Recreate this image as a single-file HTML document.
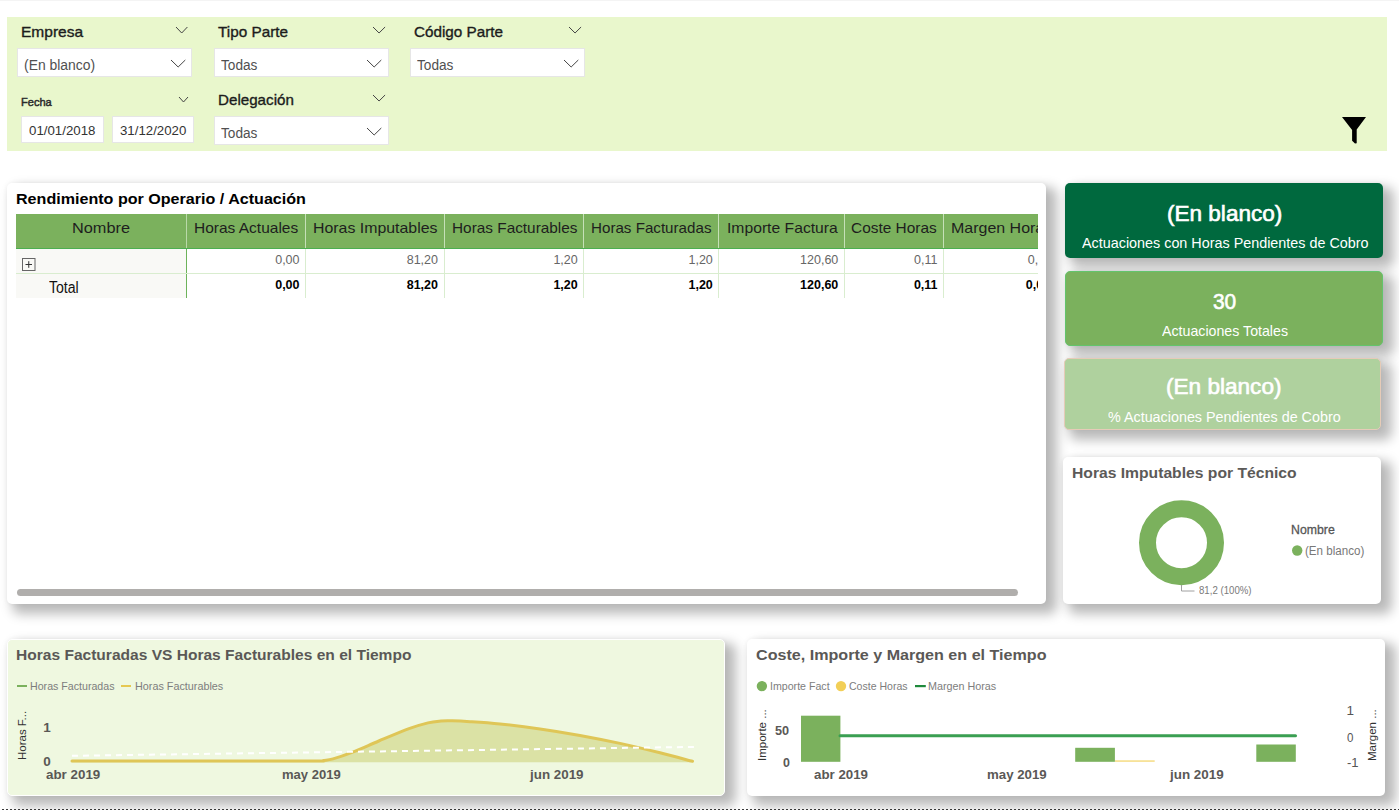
<!DOCTYPE html>
<html lang="es"><head><meta charset="utf-8"><title>Rendimiento por Operario</title>
<style>
html,body{margin:0;padding:0;background:#fff;}
body{width:1399px;height:810px;position:relative;overflow:hidden;font-family:"Liberation Sans",sans-serif;}
</style></head><body>
<div style="position:absolute;left:0.00px;top:0.00px;width:1399.00px;height:1.00px;background:#f4f4f4;"></div>
<div style="position:absolute;left:7.00px;top:17.00px;width:1380.00px;height:134.00px;background:#e9f7cc;"></div>
<span style="position:absolute;left:20.70px;top:24.00px;font-size:15px;line-height:15px;color:#1c1c1c;white-space:nowrap;transform-origin:0 0;transform:scaleX(1.0354);-webkit-text-stroke:0.35px #1c1c1c;">Empresa</span>
<span style="position:absolute;left:217.90px;top:24.00px;font-size:15px;line-height:15px;color:#1c1c1c;white-space:nowrap;transform-origin:0 0;transform:scaleX(1.0200);-webkit-text-stroke:0.35px #1c1c1c;">Tipo Parte</span>
<span style="position:absolute;left:413.60px;top:24.00px;font-size:15px;line-height:15px;color:#1c1c1c;white-space:nowrap;transform-origin:0 0;transform:scaleX(1.0169);-webkit-text-stroke:0.35px #1c1c1c;">Código Parte</span>
<span style="position:absolute;left:218.30px;top:92.00px;font-size:15px;line-height:15px;color:#1c1c1c;white-space:nowrap;transform-origin:0 0;transform:scaleX(1.0110);-webkit-text-stroke:0.35px #1c1c1c;">Delegación</span>
<span style="position:absolute;left:21.40px;top:97.00px;font-size:11px;line-height:11px;color:#2a2a2a;white-space:nowrap;transform-origin:0 0;transform:scaleX(1.0054);-webkit-text-stroke:0.45px #2a2a2a;">Fecha</span>
<div style="position:absolute;left:17.00px;top:48.00px;width:174.50px;height:29.00px;background:#fff;box-sizing:border-box;border:1px solid #e6e6e6;"></div>
<div style="position:absolute;left:214.30px;top:48.00px;width:174.30px;height:29.00px;background:#fff;box-sizing:border-box;border:1px solid #e6e6e6;"></div>
<div style="position:absolute;left:410.30px;top:48.00px;width:174.30px;height:29.00px;background:#fff;box-sizing:border-box;border:1px solid #e6e6e6;"></div>
<div style="position:absolute;left:214.30px;top:116.40px;width:174.30px;height:28.60px;background:#fff;box-sizing:border-box;border:1px solid #e6e6e6;"></div>
<div style="position:absolute;left:21.30px;top:115.50px;width:83.10px;height:27.80px;background:#fff;box-sizing:border-box;border:1px solid #e6e6e6;"></div>
<div style="position:absolute;left:111.60px;top:115.50px;width:82.80px;height:27.80px;background:#fff;box-sizing:border-box;border:1px solid #e6e6e6;"></div>
<span style="position:absolute;left:24.00px;top:58.00px;font-size:14px;line-height:14px;color:#505050;white-space:nowrap;transform-origin:0 0;transform:scaleX(0.9929);">(En blanco)</span>
<span style="position:absolute;left:221.10px;top:58.00px;font-size:14px;line-height:14px;color:#505050;white-space:nowrap;transform-origin:0 0;transform:scaleX(0.9738);">Todas</span>
<span style="position:absolute;left:417.10px;top:58.00px;font-size:14px;line-height:14px;color:#505050;white-space:nowrap;transform-origin:0 0;transform:scaleX(0.9738);">Todas</span>
<span style="position:absolute;left:221.10px;top:126.00px;font-size:14px;line-height:14px;color:#505050;white-space:nowrap;transform-origin:0 0;transform:scaleX(0.9738);">Todas</span>
<span style="position:absolute;left:29.00px;top:124.00px;font-size:13px;line-height:13px;color:#333;white-space:nowrap;transform-origin:0 0;transform:scaleX(1.0205);">01/01/2018</span>
<span style="position:absolute;left:119.70px;top:124.00px;font-size:13px;line-height:13px;color:#333;white-space:nowrap;transform-origin:0 0;transform:scaleX(1.0190);">31/12/2020</span>
<svg style="position:absolute;left:176.00px;top:27.00px;overflow:visible" width="11.40" height="6.00"><polyline points="0,0 5.70,6.00 11.40,0" fill="none" stroke="#444" stroke-width="1"/></svg>
<svg style="position:absolute;left:372.90px;top:27.00px;overflow:visible" width="12.10" height="6.00"><polyline points="0,0 6.05,6.00 12.10,0" fill="none" stroke="#444" stroke-width="1"/></svg>
<svg style="position:absolute;left:568.60px;top:27.00px;overflow:visible" width="12.10" height="6.00"><polyline points="0,0 6.05,6.00 12.10,0" fill="none" stroke="#444" stroke-width="1"/></svg>
<svg style="position:absolute;left:372.90px;top:95.00px;overflow:visible" width="12.10" height="6.00"><polyline points="0,0 6.05,6.00 12.10,0" fill="none" stroke="#444" stroke-width="1"/></svg>
<svg style="position:absolute;left:178.90px;top:97.00px;overflow:visible" width="9.00" height="5.00"><polyline points="0,0 4.50,5.00 9.00,0" fill="none" stroke="#444" stroke-width="1"/></svg>
<svg style="position:absolute;left:170.70px;top:60.00px;overflow:visible" width="14.30" height="7.00"><polyline points="0,0 7.15,7.00 14.30,0" fill="none" stroke="#444" stroke-width="1"/></svg>
<svg style="position:absolute;left:367.40px;top:60.00px;overflow:visible" width="14.30" height="7.00"><polyline points="0,0 7.15,7.00 14.30,0" fill="none" stroke="#444" stroke-width="1"/></svg>
<svg style="position:absolute;left:563.60px;top:60.00px;overflow:visible" width="14.30" height="7.00"><polyline points="0,0 7.15,7.00 14.30,0" fill="none" stroke="#444" stroke-width="1"/></svg>
<svg style="position:absolute;left:367.40px;top:128.00px;overflow:visible" width="14.30" height="7.00"><polyline points="0,0 7.15,7.00 14.30,0" fill="none" stroke="#444" stroke-width="1"/></svg>
<svg style="position:absolute;left:0;top:0;overflow:visible" width="10" height="10"><path d="M1342 117 L1366 117 L1356.7 129.6 L1356.7 143.2 L1355 143.5 L1352.1 140.8 L1352.1 130 Z" fill="#000"/></svg>
<div style="position:absolute;left:7.00px;top:183.00px;width:1039.40px;height:421.00px;background:#fff;border-radius:5px;box-shadow:8px 7px 12px 3px rgba(0,0,0,.27),0 0 5px rgba(0,0,0,.05);"></div>
<span style="position:absolute;left:16.30px;top:191.00px;font-size:15.5px;line-height:15.5px;color:#000;white-space:nowrap;transform-origin:0 0;transform:scaleX(1.0379);font-weight:700;">Rendimiento por Operario / Actuación</span>
<div style="position:absolute;left:16px;top:214px;width:1022px;height:85px;overflow:hidden">
<div style="position:absolute;left:0.00px;top:0.00px;width:1022.00px;height:34.00px;background:#7bb15d;"></div>
<div style="position:absolute;left:0.00px;top:34.00px;width:1022.00px;height:1.00px;background:#4cae50;"></div>
<div style="position:absolute;left:0.00px;top:35.00px;width:170.00px;height:49.00px;background:#f9f9f6;"></div>
<div style="position:absolute;left:170.00px;top:0.00px;width:1.00px;height:34.00px;background:#b9d9a8;"></div>
<div style="position:absolute;left:170.00px;top:35.00px;width:1.00px;height:49.00px;background:#6db35a;"></div>
<div style="position:absolute;left:289.00px;top:0.00px;width:1.00px;height:34.00px;background:#c6e0b8;"></div>
<div style="position:absolute;left:289.00px;top:35.00px;width:1.00px;height:49.00px;background:#d9edcf;"></div>
<div style="position:absolute;left:427.50px;top:0.00px;width:1.00px;height:34.00px;background:#c6e0b8;"></div>
<div style="position:absolute;left:427.50px;top:35.00px;width:1.00px;height:49.00px;background:#d9edcf;"></div>
<div style="position:absolute;left:567.20px;top:0.00px;width:1.00px;height:34.00px;background:#c6e0b8;"></div>
<div style="position:absolute;left:567.20px;top:35.00px;width:1.00px;height:49.00px;background:#d9edcf;"></div>
<div style="position:absolute;left:702.30px;top:0.00px;width:1.00px;height:34.00px;background:#c6e0b8;"></div>
<div style="position:absolute;left:702.30px;top:35.00px;width:1.00px;height:49.00px;background:#d9edcf;"></div>
<div style="position:absolute;left:827.80px;top:0.00px;width:1.00px;height:34.00px;background:#c6e0b8;"></div>
<div style="position:absolute;left:827.80px;top:35.00px;width:1.00px;height:49.00px;background:#d9edcf;"></div>
<div style="position:absolute;left:927.00px;top:0.00px;width:1.00px;height:34.00px;background:#c6e0b8;"></div>
<div style="position:absolute;left:927.00px;top:35.00px;width:1.00px;height:49.00px;background:#d9edcf;"></div>
<div style="position:absolute;left:0.00px;top:59.00px;width:1022.00px;height:1.00px;background:#d9edcf;"></div>

<span style="position:absolute;left:56.00px;top:6.00px;font-size:15px;line-height:15px;color:#1e1e1e;white-space:nowrap;transform-origin:0 0;transform:scaleX(1.0877);">Nombre</span>
<span style="position:absolute;left:178.10px;top:6.00px;font-size:15px;line-height:15px;color:#1e1e1e;white-space:nowrap;transform-origin:0 0;transform:scaleX(1.0330);">Horas Actuales</span>
<span style="position:absolute;left:297.00px;top:6.00px;font-size:15px;line-height:15px;color:#1e1e1e;white-space:nowrap;transform-origin:0 0;transform:scaleX(1.0585);">Horas Imputables</span>
<span style="position:absolute;left:435.50px;top:6.00px;font-size:15px;line-height:15px;color:#1e1e1e;white-space:nowrap;transform-origin:0 0;transform:scaleX(1.0241);">Horas Facturables</span>
<span style="position:absolute;left:575.40px;top:6.00px;font-size:15px;line-height:15px;color:#1e1e1e;white-space:nowrap;transform-origin:0 0;transform:scaleX(1.0105);">Horas Facturadas</span>
<span style="position:absolute;left:710.60px;top:6.00px;font-size:15px;line-height:15px;color:#1e1e1e;white-space:nowrap;transform-origin:0 0;transform:scaleX(1.0463);">Importe Factura</span>
<span style="position:absolute;left:835.30px;top:6.00px;font-size:15px;line-height:15px;color:#1e1e1e;white-space:nowrap;transform-origin:0 0;transform:scaleX(1.0276);">Coste Horas</span>
<span style="position:absolute;left:934.50px;top:6.00px;font-size:15px;line-height:15px;color:#1e1e1e;white-space:nowrap;transform-origin:0 0;transform:scaleX(1.0650);">Margen Horas</span>
<span style="position:absolute;left:259.19px;top:40.00px;font-size:12.5px;line-height:12.5px;color:#666;white-space:nowrap;transform-origin:0 0;transform:scaleX(1.0000);">0,00</span>
<span style="position:absolute;left:259.19px;top:65.00px;font-size:12.5px;line-height:12.5px;color:#000;white-space:nowrap;transform-origin:0 0;transform:scaleX(1.0000);font-weight:700;">0,00</span>
<span style="position:absolute;left:390.69px;top:40.00px;font-size:12.5px;line-height:12.5px;color:#666;white-space:nowrap;transform-origin:0 0;transform:scaleX(1.0000);">81,20</span>
<span style="position:absolute;left:390.69px;top:65.00px;font-size:12.5px;line-height:12.5px;color:#000;white-space:nowrap;transform-origin:0 0;transform:scaleX(1.0000);font-weight:700;">81,20</span>
<span style="position:absolute;left:537.39px;top:40.00px;font-size:12.5px;line-height:12.5px;color:#666;white-space:nowrap;transform-origin:0 0;transform:scaleX(1.0000);">1,20</span>
<span style="position:absolute;left:537.39px;top:65.00px;font-size:12.5px;line-height:12.5px;color:#000;white-space:nowrap;transform-origin:0 0;transform:scaleX(1.0000);font-weight:700;">1,20</span>
<span style="position:absolute;left:672.49px;top:40.00px;font-size:12.5px;line-height:12.5px;color:#666;white-space:nowrap;transform-origin:0 0;transform:scaleX(1.0000);">1,20</span>
<span style="position:absolute;left:672.49px;top:65.00px;font-size:12.5px;line-height:12.5px;color:#000;white-space:nowrap;transform-origin:0 0;transform:scaleX(1.0000);font-weight:700;">1,20</span>
<span style="position:absolute;left:784.05px;top:40.00px;font-size:12.5px;line-height:12.5px;color:#666;white-space:nowrap;transform-origin:0 0;transform:scaleX(1.0000);">120,60</span>
<span style="position:absolute;left:784.05px;top:65.00px;font-size:12.5px;line-height:12.5px;color:#000;white-space:nowrap;transform-origin:0 0;transform:scaleX(1.0000);font-weight:700;">120,60</span>
<span style="position:absolute;left:898.12px;top:40.00px;font-size:12.5px;line-height:12.5px;color:#666;white-space:nowrap;transform-origin:0 0;transform:scaleX(1.0000);">0,11</span>
<span style="position:absolute;left:897.88px;top:65.00px;font-size:12.5px;line-height:12.5px;color:#000;white-space:nowrap;transform-origin:0 0;transform:scaleX(1.0000);font-weight:700;">0,11</span>
<span style="position:absolute;left:1011.70px;top:40.00px;font-size:12.5px;line-height:12.5px;color:#666;white-space:nowrap;transform-origin:0 0;transform:scaleX(1.0000);">0,00</span>
<span style="position:absolute;left:1009.80px;top:65.00px;font-size:12.5px;line-height:12.5px;color:#000;white-space:nowrap;transform-origin:0 0;transform:scaleX(1.0000);font-weight:700;">0,00</span>
<span style="position:absolute;left:32.60px;top:66.00px;font-size:16px;line-height:16px;color:#111;white-space:nowrap;transform-origin:0 0;transform:scaleX(0.8797);">Total</span>
<svg style="position:absolute;left:6px;top:44px" width="14" height="14"><rect x="0.5" y="0.5" width="12.5" height="12" fill="none" stroke="#666" stroke-width="1"/><path d="M3.5 6.5 H10 M6.75 3.2 V9.8" stroke="#333" stroke-width="1" fill="none"/></svg>
</div>
<div style="position:absolute;left:17.00px;top:589.20px;width:1000.80px;height:7.10px;background:#b0aeac;border-radius:3.5px;"></div>
<div style="position:absolute;left:1065.00px;top:183.00px;width:318.00px;height:74.80px;background:#00693e;border-radius:5px;box-shadow:8px 7px 12px 3px rgba(0,0,0,.27),0 0 5px rgba(0,0,0,.05);"></div>
<div style="position:absolute;left:1065.00px;top:270.70px;width:318.00px;height:74.90px;background:#7bb15d;border-radius:5px;box-sizing:border-box;border:1px solid #63c46c;box-shadow:8px 7px 12px 3px rgba(0,0,0,.27),0 0 5px rgba(0,0,0,.05);"></div>
<div style="position:absolute;left:1063.70px;top:357.50px;width:317.60px;height:72.80px;background:#afd19e;border-radius:5px;box-sizing:border-box;border:1px solid #e6cbb8;box-shadow:8px 7px 12px 3px rgba(0,0,0,.27),0 0 5px rgba(0,0,0,.05);"></div>
<span style="position:absolute;left:1167.20px;top:203.00px;font-size:22.5px;line-height:22.5px;color:#fff;white-space:nowrap;transform-origin:0 0;transform:scaleX(1.0018);-webkit-text-stroke:0.65px #fff;">(En blanco)</span>
<span style="position:absolute;left:1082.00px;top:235.00px;font-size:15px;line-height:15px;color:#fff;white-space:nowrap;transform-origin:0 0;transform:scaleX(0.9572);">Actuaciones con Horas Pendientes de Cobro</span>
<span style="position:absolute;left:1213.40px;top:291.00px;font-size:22.5px;line-height:22.5px;color:#fff;white-space:nowrap;transform-origin:0 0;transform:scaleX(0.9289);-webkit-text-stroke:0.65px #fff;">30</span>
<span style="position:absolute;left:1162.20px;top:323.00px;font-size:15px;line-height:15px;color:#fff;white-space:nowrap;transform-origin:0 0;transform:scaleX(0.9465);">Actuaciones Totales</span>
<span style="position:absolute;left:1166.00px;top:376.00px;font-size:22.5px;line-height:22.5px;color:#fff;white-space:nowrap;transform-origin:0 0;transform:scaleX(1.0036);-webkit-text-stroke:0.65px #fff;">(En blanco)</span>
<span style="position:absolute;left:1107.90px;top:409.00px;font-size:15px;line-height:15px;color:#fff;white-space:nowrap;transform-origin:0 0;transform:scaleX(0.9555);">% Actuaciones Pendientes de Cobro</span>
<div style="position:absolute;left:1063.00px;top:457.00px;width:318.30px;height:147.10px;background:#fff;border-radius:5px;box-shadow:8px 7px 12px 3px rgba(0,0,0,.27),0 0 5px rgba(0,0,0,.05);"></div>
<span style="position:absolute;left:1072.40px;top:465.00px;font-size:15px;line-height:15px;color:#5c5a58;white-space:nowrap;transform-origin:0 0;transform:scaleX(1.0445);font-weight:700;">Horas Imputables por Técnico</span>
<svg style="position:absolute;left:1063px;top:457px" width="318" height="147"><circle cx="118.5" cy="85.8" r="34" fill="none" stroke="#7bb15d" stroke-width="17"/><polyline points="118.5,128 118.5,134 131.5,134" fill="none" stroke="#a0a0a0" stroke-width="1"/><circle cx="234.2" cy="93.5" r="5.2" fill="#7bb15d"/></svg>
<span style="position:absolute;left:1199.00px;top:585.00px;font-size:11px;line-height:11px;color:#7a7a7a;white-space:nowrap;transform-origin:0 0;transform:scaleX(0.8774);">81,2 (100%)</span>
<span style="position:absolute;left:1290.70px;top:523.00px;font-size:13px;line-height:13px;color:#555;white-space:nowrap;transform-origin:0 0;transform:scaleX(0.9456);-webkit-text-stroke:0.3px #555;">Nombre</span>
<span style="position:absolute;left:1305.00px;top:545.00px;font-size:12px;line-height:12px;color:#787878;white-space:nowrap;transform-origin:0 0;transform:scaleX(0.9661);">(En blanco)</span>
<div style="position:absolute;left:7.20px;top:638.80px;width:718.00px;height:157.40px;background:#eff8e0;border-radius:5px;box-sizing:border-box;border:1px solid #fff;box-shadow:8px 7px 12px 3px rgba(0,0,0,.27),0 0 5px rgba(0,0,0,.05);"></div>
<span style="position:absolute;left:16.30px;top:647.00px;font-size:15px;line-height:15px;color:#5a5856;white-space:nowrap;transform-origin:0 0;transform:scaleX(1.0364);font-weight:700;">Horas Facturadas VS Horas Facturables en el Tiempo</span>
<div style="position:absolute;left:17.00px;top:685.00px;width:10.30px;height:2.00px;background:#7bb15d;"></div>
<div style="position:absolute;left:121.20px;top:685.00px;width:10.20px;height:2.00px;background:#e6c851;"></div>
<span style="position:absolute;left:30.30px;top:681.00px;font-size:11.5px;line-height:11.5px;color:#7d7d7d;white-space:nowrap;transform-origin:0 0;transform:scaleX(0.9243);">Horas Facturadas</span>
<span style="position:absolute;left:134.50px;top:681.00px;font-size:11.5px;line-height:11.5px;color:#7d7d7d;white-space:nowrap;transform-origin:0 0;transform:scaleX(0.9387);">Horas Facturables</span>
<svg style="position:absolute;left:0;top:700px" width="730" height="70" viewBox="0 700 730 70"><path d="M72.0 761.0 C93.3 761.0 160.0 761.0 200.0 761.0 C240.0 761.0 291.3 761.1 312.0 761.0 C332.7 760.9 320.5 760.8 324.0 760.4 C327.5 760.0 328.3 760.2 333.0 758.9 C337.7 757.6 344.4 755.4 352.0 752.4 C359.6 749.4 369.3 745.0 378.8 741.0 C388.3 737.0 400.8 731.6 409.0 728.6 C417.2 725.6 422.7 724.2 428.0 722.9 C433.3 721.6 437.0 721.4 441.0 721.0 C445.0 720.6 447.2 720.7 452.0 720.8 C456.8 720.9 462.0 721.1 470.0 721.7 C478.0 722.2 488.3 722.8 500.0 724.0 C511.7 725.2 526.7 727.0 540.0 728.9 C553.3 730.8 566.7 733.0 580.0 735.4 C593.3 737.8 606.7 740.5 620.0 743.4 C633.3 746.3 647.9 749.8 660.0 752.8 C672.1 755.8 687.1 759.9 692.5 761.3 L692.5 762.3 L72 762.3 Z" fill="#d3d98c" fill-opacity="0.7"/><path d="M72.0 761.0 C93.3 761.0 160.0 761.0 200.0 761.0 C240.0 761.0 291.3 761.1 312.0 761.0 C332.7 760.9 320.5 760.8 324.0 760.4 C327.5 760.0 328.3 760.2 333.0 758.9 C337.7 757.6 344.4 755.4 352.0 752.4 C359.6 749.4 369.3 745.0 378.8 741.0 C388.3 737.0 400.8 731.6 409.0 728.6 C417.2 725.6 422.7 724.2 428.0 722.9 C433.3 721.6 437.0 721.4 441.0 721.0 C445.0 720.6 447.2 720.7 452.0 720.8 C456.8 720.9 462.0 721.1 470.0 721.7 C478.0 722.2 488.3 722.8 500.0 724.0 C511.7 725.2 526.7 727.0 540.0 728.9 C553.3 730.8 566.7 733.0 580.0 735.4 C593.3 737.8 606.7 740.5 620.0 743.4 C633.3 746.3 647.9 749.8 660.0 752.8 C672.1 755.8 687.1 759.9 692.5 761.3" fill="none" stroke="#dfc657" stroke-width="3" stroke-linecap="round" stroke-linejoin="round"/><line x1="72" y1="755.8" x2="693.9" y2="746.9" stroke="#fff" stroke-width="2" stroke-dasharray="6 5"/></svg>
<span style="position:absolute;left:43.35px;top:721.00px;font-size:13.5px;line-height:13.5px;color:#5a5856;white-space:nowrap;transform-origin:0 0;transform:scaleX(1.0000);font-weight:700;">1</span>
<span style="position:absolute;left:43.35px;top:755.00px;font-size:13.5px;line-height:13.5px;color:#5a5856;white-space:nowrap;transform-origin:0 0;transform:scaleX(1.0000);font-weight:700;">0</span>
<span style="position:absolute;left:46.40px;top:768.00px;font-size:13px;line-height:13px;color:#5a5856;white-space:nowrap;transform-origin:0 0;transform:scaleX(1.0288);font-weight:700;">abr 2019</span>
<span style="position:absolute;left:282.20px;top:768.00px;font-size:13px;line-height:13px;color:#5a5856;white-space:nowrap;transform-origin:0 0;transform:scaleX(1.0040);font-weight:700;">may 2019</span>
<span style="position:absolute;left:530.27px;top:768.00px;font-size:13px;line-height:13px;color:#5a5856;white-space:nowrap;transform-origin:0 0;transform:scaleX(1.0295);font-weight:700;">jun 2019</span>
<span style="position:absolute;left:16.95px;top:760.00px;font-size:11.5px;line-height:11.5px;color:#333;white-space:nowrap;transform-origin:0 0;transform:rotate(-90deg);">Horas F...</span>
<div style="position:absolute;left:747.20px;top:639.30px;width:637.40px;height:156.50px;background:#fff;border-radius:5px;box-shadow:8px 7px 12px 3px rgba(0,0,0,.27),0 0 5px rgba(0,0,0,.05);"></div>
<span style="position:absolute;left:756.20px;top:647.00px;font-size:15px;line-height:15px;color:#5a5856;white-space:nowrap;transform-origin:0 0;transform:scaleX(1.0735);font-weight:700;">Coste, Importe y Margen en el Tiempo</span>
<svg style="position:absolute;left:747px;top:639px" width="638" height="157" viewBox="747 639 638 157"><circle cx="761.9" cy="686.1" r="5.2" fill="#7bb15d"/><circle cx="841" cy="686.1" r="5.2" fill="#f2cf57"/><rect x="915" y="685" width="10.8" height="2.2" fill="#1f8a3c"/><rect x="801" y="715.7" width="39.4" height="46.1" fill="#7bb15d"/><rect x="1075.2" y="747.8" width="39.7" height="14" fill="#7bb15d"/><rect x="1256.3" y="744.5" width="39.5" height="17.3" fill="#7bb15d"/><rect x="1115" y="760.5" width="39.7" height="1.1" fill="#f2cf57"/><line x1="840" y1="735.8" x2="1295.5" y2="735.8" stroke="#3a9f52" stroke-width="3" stroke-linecap="round"/></svg>
<span style="position:absolute;left:770.40px;top:681.00px;font-size:11.5px;line-height:11.5px;color:#7d7d7d;white-space:nowrap;transform-origin:0 0;transform:scaleX(0.9230);">Importe Fact</span>
<span style="position:absolute;left:849.40px;top:681.00px;font-size:11.5px;line-height:11.5px;color:#7d7d7d;white-space:nowrap;transform-origin:0 0;transform:scaleX(0.9165);">Coste Horas</span>
<span style="position:absolute;left:928.40px;top:681.00px;font-size:11.5px;line-height:11.5px;color:#7d7d7d;white-space:nowrap;transform-origin:0 0;transform:scaleX(0.9361);">Margen Horas</span>
<span style="position:absolute;left:775.30px;top:724.00px;font-size:13.5px;line-height:13.5px;color:#5a5856;white-space:nowrap;transform-origin:0 0;transform:scaleX(0.9409);font-weight:700;">50</span>
<span style="position:absolute;left:782.50px;top:756.00px;font-size:13.5px;line-height:13.5px;color:#5a5856;white-space:nowrap;transform-origin:0 0;transform:scaleX(0.9209);font-weight:700;">0</span>
<span style="position:absolute;left:813.90px;top:768.00px;font-size:13px;line-height:13px;color:#5a5856;white-space:nowrap;transform-origin:0 0;transform:scaleX(1.0231);font-weight:700;">abr 2019</span>
<span style="position:absolute;left:986.50px;top:768.00px;font-size:13px;line-height:13px;color:#5a5856;white-space:nowrap;transform-origin:0 0;transform:scaleX(1.0194);font-weight:700;">may 2019</span>
<span style="position:absolute;left:1170.37px;top:768.00px;font-size:13px;line-height:13px;color:#5a5856;white-space:nowrap;transform-origin:0 0;transform:scaleX(1.0314);font-weight:700;">jun 2019</span>
<span style="position:absolute;left:1346.45px;top:704.00px;font-size:13.5px;line-height:13.5px;color:#555;white-space:nowrap;transform-origin:0 0;transform:scaleX(1.0000);">1</span>
<span style="position:absolute;left:1346.60px;top:731.00px;font-size:13.5px;line-height:13.5px;color:#555;white-space:nowrap;transform-origin:0 0;transform:scaleX(0.8542);">0</span>
<span style="position:absolute;left:1346.60px;top:756.00px;font-size:13.5px;line-height:13.5px;color:#555;white-space:nowrap;transform-origin:0 0;transform:scaleX(0.9655);">-1</span>
<span style="position:absolute;left:756.65px;top:761.00px;font-size:11.5px;line-height:11.5px;color:#333;white-space:nowrap;transform-origin:0 0;transform:rotate(-90deg);">Importe ...</span>
<span style="position:absolute;left:1366.55px;top:760.60px;font-size:11.5px;line-height:11.5px;color:#333;white-space:nowrap;transform-origin:0 0;transform:rotate(-90deg);">Margen ...</span>
<div style="position:absolute;left:0;top:809px;width:1399px;height:1px;background:repeating-linear-gradient(90deg,transparent 0 2px,#3a3a3a 2px 4px)"></div>
</body></html>
